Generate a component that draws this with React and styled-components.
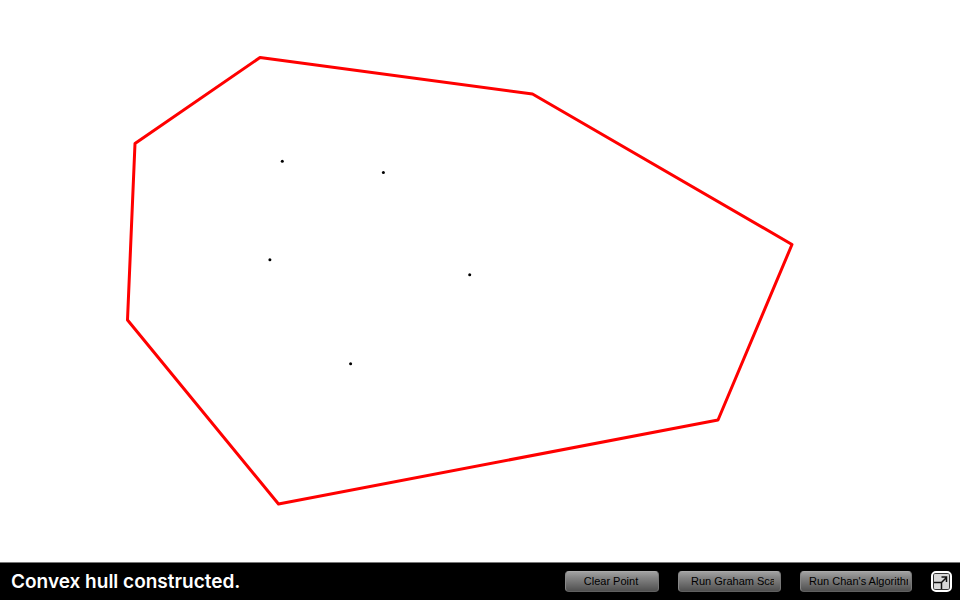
import React from "react";
import styled, { createGlobalStyle } from "styled-components";

const GlobalStyle = createGlobalStyle`
  * { box-sizing: border-box; }
  body { margin: 0; background: #fff; font-family: "Liberation Sans", Arial, sans-serif; }
`;

const Page = styled.div`
  display: flex;
  flex-direction: column;
  height: 100vh;
`;

const Stage = styled.main`
  flex: 1;
  min-height: 0;
  display: flex;
`;

const Plot = styled.svg`
  flex: 1;
  min-width: 0;
  height: 100%;
`;

const Footer = styled.footer`
  display: flex;
  align-items: center;
  justify-content: space-between;
  gap: 19px;
  padding: 8px 8px 8px 11px;
  background: #000;
  border-top: 1px solid #777;
`;

const Status = styled.p`
  margin: 0;
  color: #fff;
  font-family: Inter, "Liberation Sans", sans-serif;
  font-size: 19px;
  line-height: 21px;
  font-weight: 600;
  white-space: nowrap;
`;

const Actions = styled.div`
  display: flex;
  align-items: center;
  gap: 19px;
`;

const ActionButton = styled.button`
  width: ${(p) => p.$width}px;
  height: 21px;
  padding: ${(p) => p.$padding};
  border: 1px solid;
  border-color: #aaa #777 #606060 #888;
  border-radius: 4px;
  background: linear-gradient(#a0a0a0, #858585 30%, #505050);
  color: #000;
  font-family: inherit;
  font-size: 11px;
  line-height: 19px;
  cursor: pointer;
`;

const Label = styled.span`
  display: block;
  overflow: hidden;
  white-space: nowrap;
`;

const IconButton = styled.button`
  display: flex;
  width: 21px;
  height: 21px;
  padding: 0;
  border: 0;
  background: none;
  cursor: pointer;
`;

const hull = [
  [260, 57.5], [532.5, 94], [792, 244.5], [718, 420],
  [278.5, 504], [127.5, 320], [135, 143.5],
];

const points = [
  [282.3, 161.3], [383.4, 172.5], [269.9, 259.7], [469.7, 274.7], [350.6, 363.7],
];

const actions = [
  { label: "Clear Point", width: 94, padding: "0 12px 0 10px" },
  { label: "Run Graham Scan", width: 103, padding: "0 6px 0 12px" },
  { label: "Run Chan's Algorithm", width: 112, padding: "0 3px 0 8px" },
];

export default function App() {
  return (
    <Page>
      <GlobalStyle />
      <Stage>
        <Plot viewBox="0 0 960 562" role="img" aria-label="Convex hull">
          <polygon
            points={hull.map((p) => p.join(",")).join(" ")}
            fill="none"
            stroke="#f00"
            strokeWidth="3"
            strokeLinejoin="round"
          />
          {points.map(([x, y]) => (
            <circle key={`${x}-${y}`} cx={x} cy={y} r="1.5" fill="#000" />
          ))}
        </Plot>
      </Stage>
      <Footer>
        <Status role="status">Convex hull constructed.</Status>
        <Actions>
          {actions.map((a) => (
            <ActionButton key={a.label} type="button" $width={a.width} $padding={a.padding}>
              <Label>{a.label}</Label>
            </ActionButton>
          ))}
          <IconButton type="button" aria-label="Full screen">
            <svg width="21" height="21" viewBox="0 0 21 21" fill="none">
              <rect x="1" y="1" width="19" height="19" rx="4" fill="#333" stroke="#fff" strokeWidth="2" />
              <rect x="3" y="3" width="15" height="15" rx="1" fill="#d8d8d8" />
              <path d="M3 11.5H10.5V18M10.5 11.5L15.5 6.5M10.5 6H15.5V11" stroke="#111" strokeWidth="1.5" />
            </svg>
          </IconButton>
        </Actions>
      </Footer>
    </Page>
  );
}
